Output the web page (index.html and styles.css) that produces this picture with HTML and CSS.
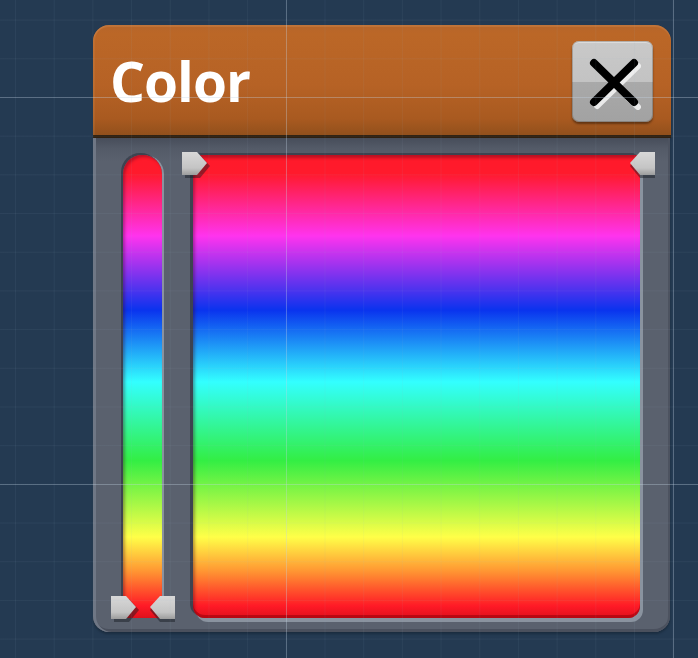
FILE: index.html
```html
<!DOCTYPE html>
<html lang="en">
<head>
<meta charset="utf-8">
<title>Color</title>
<link rel="stylesheet" href="styles.css">
</head>
<body>
<div class="page">
  <section class="panel">
    <header class="header">
      <h1 class="title">Color</h1>
      <button class="close" aria-label="Close">
        <svg width="81" height="81" viewBox="0 0 81 81">
          <g stroke="#f2f2f2" stroke-width="6" stroke-linecap="round" opacity="0.9">
            <line x1="66" y1="25" x2="25" y2="65"/>
            <line x1="56" y1="57" x2="66" y2="66"/>
          </g>
          <g stroke="#000" stroke-width="8" stroke-linecap="round">
            <line x1="22" y1="22" x2="62" y2="61"/>
            <line x1="62" y1="22" x2="22" y2="61"/>
          </g>
        </svg>
      </button>
    </header>
    <div class="body">
      <div class="strip">
        <svg class="handle h-strip-left" width="28" height="26" viewBox="0 0 28 26">
          <defs><linearGradient id="hg1" x1="0" y1="0" x2="0" y2="1"><stop offset="0" stop-color="#d8d8d8"/><stop offset="0.7" stop-color="#c4c4c4"/><stop offset="1" stop-color="#9c9c9c"/></linearGradient></defs>
          <polygon points="3,3 18,3 28,14 18,26 3,26" fill="rgba(20,24,32,0.45)"/>
          <polygon points="0,0 15,0 25,11 15,23 0,23" fill="url(#hg1)"/>
        </svg>
        <svg class="handle flip h-strip-right" width="28" height="26" viewBox="0 0 28 26">
          <polygon points="0,3 15,3 25,14 15,26 0,26" fill="rgba(20,24,32,0.45)"/>
          <polygon points="0,0 15,0 25,11 15,23 0,23" fill="url(#hg1)"/>
        </svg>
      </div>
      <div class="field">
        <svg class="handle h-field-left" width="28" height="26" viewBox="0 0 28 26">
          <polygon points="3,3 18,3 28,14 18,26 3,26" fill="rgba(20,24,32,0.45)"/>
          <polygon points="0,0 15,0 25,11 15,23 0,23" fill="url(#hg1)"/>
        </svg>
        <svg class="handle flip h-field-right" width="28" height="26" viewBox="0 0 28 26">
          <polygon points="0,3 15,3 25,14 15,26 0,26" fill="rgba(20,24,32,0.45)"/>
          <polygon points="0,0 15,0 25,11 15,23 0,23" fill="url(#hg1)"/>
        </svg>
      </div>
    </div>
  </section>
</div>
<div class="grid-overlay"></div>
</body>
</html>
```
FILE: styles.css
```css
html, body {
  margin: 0;
  padding: 0;
}
body {
  width: 698px;
  height: 658px;
  overflow: hidden;
  background: #243a52;
  font-family: "Open Sans", "Noto Sans", "Liberation Sans", sans-serif;
}
.grid-overlay {
  position: fixed;
  inset: 0;
  pointer-events: none;
  background-image:
    linear-gradient(to right, rgba(200,215,230,0.3) 1px, transparent 1px),
    linear-gradient(to bottom, rgba(200,215,230,0.3) 1px, transparent 1px),
    linear-gradient(to right, rgba(160,185,210,0.07) 1px, transparent 1px),
    linear-gradient(to bottom, rgba(160,185,210,0.07) 1px, transparent 1px);
  background-size: 387px 387px, 387px 387px, 38.7px 38.7px, 38.7px 38.7px;
  background-position: 286px 0, 0 97px, 15px 0, 0 19.6px;
}
.page {
  padding: 25px 0 0 93px;
}
.panel {
  width: 577px;
  display: flex;
  flex-direction: column;
  filter: drop-shadow(0 2px 1px rgba(10, 20, 30, 0.35));
}
.header {
  box-sizing: border-box;
  height: 113px;
  width: 578px;
  border-radius: 16px 16px 0 0;
  border-bottom: 3px solid #2f2010;
  background: linear-gradient(#b6652a 0%, #bb6727 8%, #b66225 55%, #a95a20 85%, #92501c 100%);
  box-shadow: inset 0 2px 1px rgba(255, 200, 150, 0.15), inset 2px 0 1px rgba(255,190,130,0.1);
  display: flex;
  align-items: center;
  justify-content: space-between;
  padding: 0 18px 0 17px;
}
.title {
  margin: 0;
  font-family: "Open Sans", "Noto Sans", sans-serif;
  font-weight: 700;
  font-size: 55px;
  line-height: 1;
  color: #fff;
  letter-spacing: -1px;
}
.close {
  width: 81px;
  height: 81px;
  margin-top: 3px;
  padding: 0;
  border: 0;
  border-radius: 7px;
  background: linear-gradient(#c9c9c9 0%, #c3c3c3 51%, #a9a9a9 51%, #a2a2a2 100%);
  box-shadow: inset 0 0 0 1px rgba(60, 40, 20, 0.25), inset 0 2px 0 rgba(255,255,255,0.35), 0 2px 2px rgba(40, 20, 5, 0.5);
  display: flex;
  align-items: center;
  justify-content: center;
}
.close svg {
  display: block;
}
.body {
  box-sizing: border-box;
  height: 494px;
  padding: 17px 30px 0 30px;
  display: flex;
  align-items: flex-start;
  gap: 31px;
  border-radius: 0 0 16px 16px;
  background: linear-gradient(#474d5a 0px, #535a67 10px, #5a616e 24px, #5a616e 100%);
  box-shadow: inset 3px 0 0 #6f7785, inset -2px 0 0 #4d5360, inset 0 -3px 0 #4a505d;
}
.strip,
.field {
  position: relative;
  height: 463px;
  background: linear-gradient(
    #ff1a2a 0%,
    #ff1a2c 4%,
    #ff33ee 17.5%,
    #0a33ee 33.5%,
    #33ffff 49%,
    #33ee44 66%,
    #ffff48 82.5%,
    #ff9432 90%,
    #ff1a26 97.4%,
    #e0101c 100%
  );
}
.strip {
  width: 39px;
  border-radius: 19px 19px 3px 3px;
  box-shadow: -2px -2px 0 #3d4350, 2px 0 0 #8a929f, inset 2px 2px 3px rgba(60, 0, 30, 0.35);
}
.field {
  width: 447px;
  border-radius: 5px 5px 12px 12px;
  box-shadow: -3px -2px 0 #3d4350, 3px 4px 0 #8a939f, inset 0 -3px 0 rgba(150, 0, 10, 0.55), inset 2px 3px 3px rgba(60, 0, 20, 0.35);
}
.handle {
  position: absolute;
  display: block;
}
.flip {
  transform: scaleX(-1);
}
.h-strip-left {
  left: -12px;
  bottom: -4px;
}
.h-strip-right {
  right: -13px;
  bottom: -4px;
}
.h-field-left {
  left: -11px;
  top: -3px;
}
.h-field-right {
  right: -15px;
  top: -3px;
}
```
